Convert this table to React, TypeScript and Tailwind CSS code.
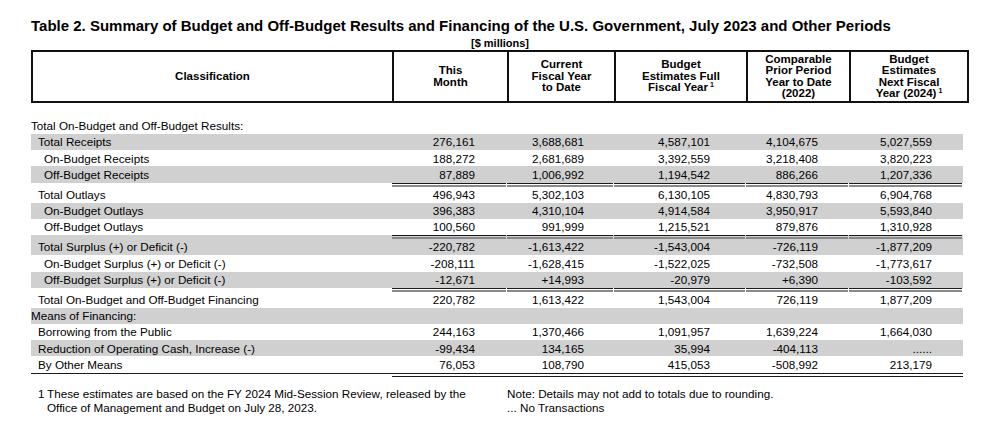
type Row = {
  label: string;
  level: 0 | 1 | 2;
  values?: string[];
  shade?: boolean;
  sep?: boolean;
};

const rows: Row[] = [
  { label: 'Total On-Budget and Off-Budget Results:', level: 0 },
  { label: 'Total Receipts', level: 1, values: ['276,161', '3,688,681', '4,587,101', '4,104,675', '5,027,559'], shade: true },
  { label: 'On-Budget Receipts', level: 2, values: ['188,272', '2,681,689', '3,392,559', '3,218,408', '3,820,223'] },
  { label: 'Off-Budget Receipts', level: 2, values: ['87,889', '1,006,992', '1,194,542', '886,266', '1,207,336'], shade: true },
  { label: 'Total Outlays', level: 1, values: ['496,943', '5,302,103', '6,130,105', '4,830,793', '6,904,768'], sep: true },
  { label: 'On-Budget Outlays', level: 2, values: ['396,383', '4,310,104', '4,914,584', '3,950,917', '5,593,840'], shade: true },
  { label: 'Off-Budget Outlays', level: 2, values: ['100,560', '991,999', '1,215,521', '879,876', '1,310,928'] },
  { label: 'Total Surplus (+) or Deficit (-)', level: 1, values: ['-220,782', '-1,613,422', '-1,543,004', '-726,119', '-1,877,209'], shade: true, sep: true },
  { label: 'On-Budget Surplus (+) or Deficit (-)', level: 2, values: ['-208,111', '-1,628,415', '-1,522,025', '-732,508', '-1,773,617'] },
  { label: 'Off-Budget Surplus (+) or Deficit (-)', level: 2, values: ['-12,671', '+14,993', '-20,979', '+6,390', '-103,592'], shade: true },
  { label: 'Total On-Budget and Off-Budget Financing', level: 1, values: ['220,782', '1,613,422', '1,543,004', '726,119', '1,877,209'], sep: true },
  { label: 'Means of Financing:', level: 0, shade: true },
  { label: 'Borrowing from the Public', level: 1, values: ['244,163', '1,370,466', '1,091,957', '1,639,224', '1,664,030'] },
  { label: 'Reduction of Operating Cash, Increase (-)', level: 1, values: ['-99,434', '134,165', '35,994', '-404,113', '......'], shade: true },
  { label: 'By Other Means', level: 1, values: ['76,053', '108,790', '415,053', '-508,992', '213,179'] },
];

// widths of the five number columns in the body, and the right padding of each
const numCols = [
  'w-[115px] pr-[32px]',
  'w-[107px] pr-[30px]',
  'w-[132px] pr-[36px]',
  'w-[103px] pr-[31px]',
  'w-[114px] pr-[31px]',
];
const numWidths = ['w-[115px]', 'w-[107px]', 'w-[132px]', 'w-[103px]', 'w-[114px]'];
const indent = ['pl-0', 'pl-[7px]', 'pl-[13px]'];

const Sup = () => <span className="ml-[2px] inline-block align-top text-[7px] leading-[7px] -mt-[1px]">1</span>;

const Separator = ({ shade }: { shade?: boolean }) => (
  <div className={`flex h-[4px] ${shade ? 'bg-[#d0d0d0]' : 'bg-white'}`}>
    <div className="w-[361px]" />
    {numWidths.map((w, i) => (
      <div key={i} className={`${w} pr-[1px]`}>
        <div className="h-[1px] bg-[#1a1a1a]" />
        <div className="h-[1px]" />
        <div className="h-[2px] bg-[#8a8a8a]" />
      </div>
    ))}
  </div>
);

export default function App() {
  return (
    <div className="w-[995px] h-[432px] bg-white text-black pl-[31px] pt-[16px] font-['Liberation_Sans',Arial,sans-serif]">
      <div className="h-[20px] text-[15px] font-bold leading-[20px] whitespace-nowrap">
        Table 2. Summary of Budget and Off-Budget Results and Financing of the U.S. Government, July 2023 and Other Periods
      </div>
      <div className="w-[938px] h-[14px] text-center text-[11px] font-bold leading-[14px]">[$ millions]</div>

      {/* column headings */}
      <div className="flex w-[938px] h-[53px] border-2 border-[#111] text-[11.5px] font-bold leading-[11.5px] text-center">
        <div className="w-[359px] flex items-center justify-center">Classification</div>
        <div className="w-[115px] border-l-2 border-[#111] flex items-center justify-center">
          This
          <br />
          Month
        </div>
        <div className="w-[107px] border-l-2 border-[#111] flex items-center justify-center">
          Current
          <br />
          Fiscal Year
          <br />
          to Date
        </div>
        <div className="w-[132px] border-l-2 border-[#111] flex items-center justify-center">
          <div>
            Budget
            <br />
            Estimates Full
            <br />
            Fiscal Year
            <Sup />
          </div>
        </div>
        <div className="w-[103px] border-l-2 border-[#111] flex items-center justify-center">
          Comparable
          <br />
          Prior Period
          <br />
          Year to Date
          <br />
          (2022)
        </div>
        <div className="w-[118px] border-l-2 border-[#111] flex items-center justify-center">
          <div>
            Budget
            <br />
            Estimates
            <br />
            Next Fiscal
            <br />
            Year (2024)
            <Sup />
          </div>
        </div>
      </div>

      {/* body */}
      <div className="mt-[14px] w-[932px] text-[11.7px]">
        {rows.map((r, idx) => (
          <div key={idx}>
            {r.sep && <Separator shade={r.shade} />}
            <div
              className={`flex items-center ${idx === 0 ? 'h-[17px]' : 'h-[16.2px]'} ${r.shade ? 'bg-[#d0d0d0]' : 'bg-white'}`}
            >
              <div className={`w-[361px] ${indent[r.level]} whitespace-nowrap`}>{r.label}</div>
              {r.values?.map((v, i) => (
                <div key={i} className={`${numCols[i]} text-right whitespace-nowrap`}>
                  {v}
                </div>
              ))}
            </div>
          </div>
        ))}
        <div className="h-[1px] bg-[#1a1a1a]" />
        <div className="flex h-[3px]">
          <div className="w-[361px]" />
          <div className="flex-1 flex flex-col justify-end">
            <div className="h-[1px] bg-[#1a1a1a]" />
          </div>
        </div>
      </div>

      {/* notes */}
      <div className="mt-[10px] flex text-[11.7px] leading-[14px]">
        <div className="w-[476px] flex pl-[7px]">
          <div className="w-[9px]">1</div>
          <div>
            These estimates are based on the FY 2024 Mid-Session Review, released by the
            <br />
            Office of Management and Budget on July 28, 2023.
          </div>
        </div>
        <div>
          Note: Details may not add to totals due to rounding.
          <br />
          ... No Transactions
        </div>
      </div>
    </div>
  );
}
